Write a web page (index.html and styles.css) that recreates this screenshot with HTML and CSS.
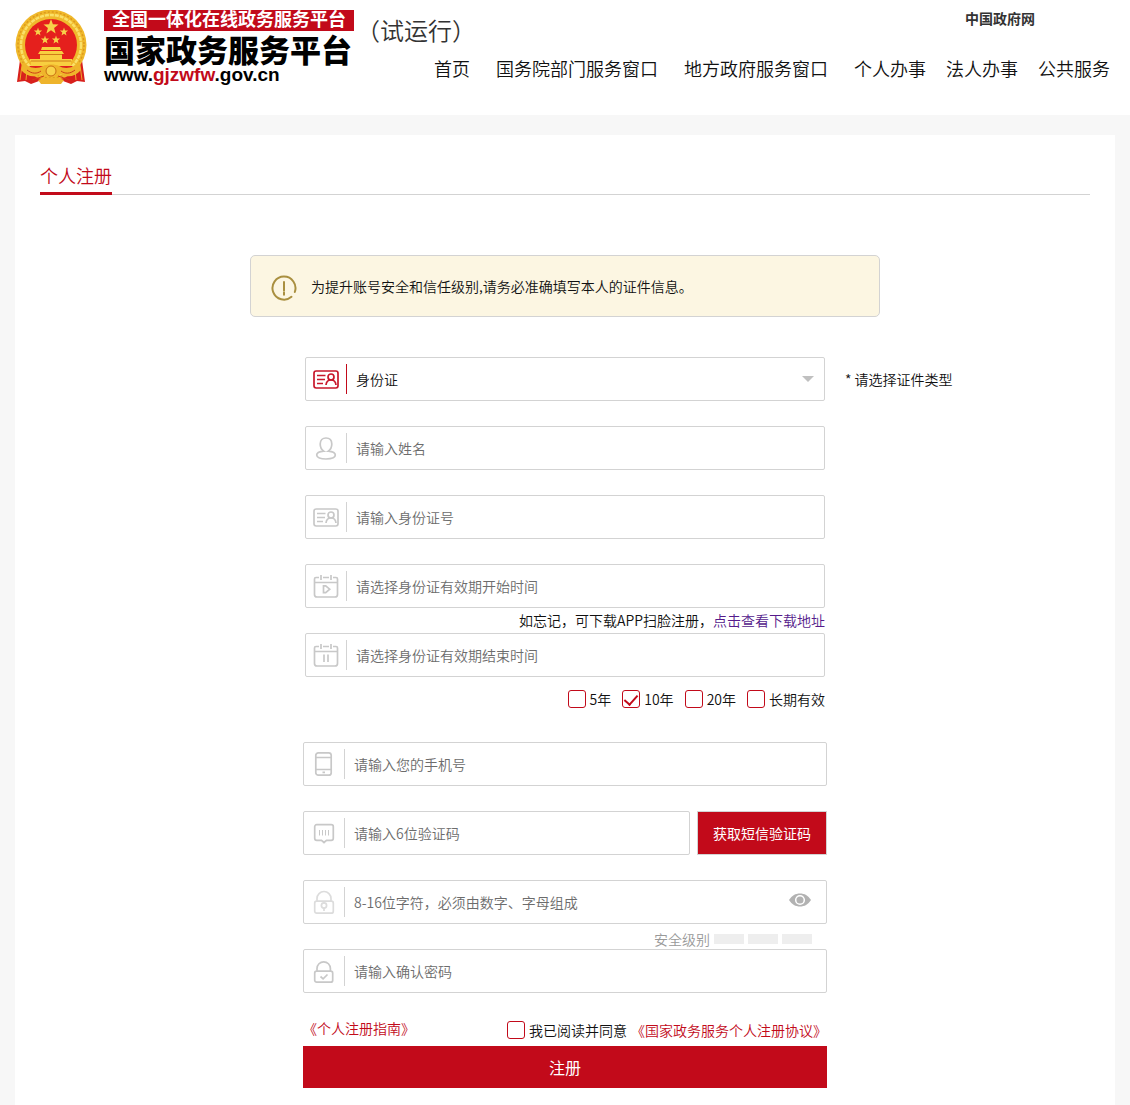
FILE: index.html
```html
<!DOCTYPE html>
<html lang="zh-CN">
<head>
    <meta charset="UTF-8">
    <title>个人注册</title>
    <link rel="stylesheet" href="styles.css">
</head>
<body>
    <!-- icons used by the form fields -->
    <svg class="sprite" aria-hidden="true">
        <symbol id="icon-card" viewBox="0 0 26 26">
            <rect x="1" y="5" width="24" height="17" rx="2.2" />
            <path d="M4 9.500h8.500M4 13.500h8M4 17.500h6" />
            <circle cx="18" cy="11" r="3" />
            <path d="M13 19c.3-3.500 2-5 5-5s4.700 1.500 5 5" />
        </symbol>
        <symbol id="icon-user" viewBox="0 0 26 26">
            <path d="M10.700 16.200C8.300 14.500 7.200 12 7.200 9c0-3.800 2.400-6 5.800-6s5.800 2.200 5.800 6c0 3-1.100 5.500-3.500 7.200 4.200.4 7 1.800 7 3.900 0 2.500-3.900 3.900-9.300 3.900s-9.300-1.400-9.300-3.900c0-2.100 2.800-3.500 7-3.900z" />
        </symbol>
        <symbol id="icon-start" viewBox="0 0 26 26">
            <path d="M3.500 4.500H3a1.500 1.500 0 0 0-1.500 1.500v15.500A2.500 2.500 0 0 0 4 24h18a2.500 2.500 0 0 0 2.500-2.500V6A1.500 1.500 0 0 0 23 4.500h-.5M1.500 9.500h23M10 4.500h6M8 2v5M18 2v5M3 4.500h3M20 4.500h3" />
            <path d="M10.500 12.800v6.800h2.200l4-3.400-4-3.400z" />
        </symbol>
        <symbol id="icon-end" viewBox="0 0 26 26">
            <path d="M3.500 4.500H3a1.500 1.500 0 0 0-1.500 1.500v15.500A2.500 2.500 0 0 0 4 24h18a2.500 2.500 0 0 0 2.500-2.500V6A1.500 1.500 0 0 0 23 4.500h-.5M1.500 9.500h23M10 4.500h6M8 2v5M18 2v5M3 4.500h3M20 4.500h3M11 12.500v7.500M15 12.500v7.500" />
        </symbol>
        <symbol id="icon-phone" viewBox="0 0 26 26">
            <rect x="4.800" y="1.800" width="15.400" height="22.400" rx="2.500" />
            <path d="M5 6.500h15M5 18.500h15M11.500 21.300h2.500" />
        </symbol>
        <symbol id="icon-sms" viewBox="0 0 26 26">
            <path d="M5.700 4.700h14.600a2 2 0 0 1 2 2v11.600a2 2 0 0 1-2 2h-4.800L13 22.500l-2.500-2.200H5.700a2 2 0 0 1-2-2V6.700a2 2 0 0 1 2-2z" />
            <path d="M8.500 10v5.500M11.500 10v5.500M14.500 10v5.500M17.500 10v5.500" stroke-width="1" />
        </symbol>
        <symbol id="icon-lock" viewBox="0 0 26 26">
            <rect x="3.700" y="12.200" width="18.600" height="12" rx="2" />
            <path d="M6 12V9.500a7 7 0 0 1 14 0V12M13 19v3" />
            <circle cx="13" cy="16.500" r="2.600" />
        </symbol>
        <symbol id="icon-confirm" viewBox="0 0 26 26">
            <rect x="3.700" y="13.200" width="18" height="11" rx="2" />
            <path d="M6 13v-2.500a6.700 6.700 0 0 1 13.400 0V13M9.500 18.500l2.600 2.300 4.400-4.300" />
        </symbol>
    </svg>

    <header class="header">
        <svg class="emblem" viewBox="0 0 72 74" role="img" aria-label="国徽">
            <path d="M5 50L2 72l8-1 6 3 8-3h24l8 3 6-3 8 1-3-22z" fill="#d8201c" />
            <path d="M7 55l-2 15M12 59l-1 11M65 55l2 15M60 59l1 11" stroke="#f0a52a" fill="none" />
            <circle cx="36" cy="35" r="35.500" fill="#f0b92c" />
            <circle cx="36" cy="35" r="33" fill="none" stroke="#dc9a1e" stroke-width="1.500" stroke-dasharray="2 2" />
            <circle cx="36" cy="35" r="30" fill="none" stroke="#fae069" stroke-width="2.500" stroke-dasharray="4 1" />
            <circle cx="36" cy="35" r="26" fill="#e5201d" />
            <path d="M36 9l1.900 5.300 5.600.2-4.400 3.500 1.500 5.400-4.600-3.100-4.600 3.100 1.500-5.400-4.400-3.500 5.600-.2z" fill="#f7d24a" />
            <path id="star" d="M23 17.500l1 2.900 3.100.1-2.400 1.900.8 3-2.500-1.700-2.500 1.700.8-3-2.400-1.900 3.100-.1z" fill="#f7d24a" />
            <use href="#star" x="26" />
            <use href="#star" x="7" y="8" />
            <use href="#star" x="18" y="8" />
            <path d="M27 37h18l1 3H26zM25 41h22l2 3H23zM25 44h22v5H25zM15 49h42v2h-42zM16 51h40v5H16z" fill="#f8cf40" />
            <path d="M16 51h40M25 44.500h22" stroke="#cf7c18" fill="none" />
            <path d="M14 56h44l-6 7H20z" fill="#de221d" />
            <path d="M8 52c6 7 15 7 20 4 3-2 13-2 16 0 5 3 14 3 20-4l2 8c-6 7-14 8-20 4-3 4-17 4-20 0-6 4-14 3-20-4z" fill="#efb52b" />
            <circle cx="36" cy="61" r="5" fill="#f9d34a" stroke="#c86d13" />
            <path d="M23 70c7-3 19-3 26 0l-3 4H26z" fill="#eeb42c" />
            <path d="M29 66l-12 4M43 66l12 4M12 60c5 4 10 4 14 1M60 60c-5 4-10 4-14 1" stroke="#ce3c18" fill="none" />
        </svg>
        <div class="wordmark">
            <div class="wordmark-top">全国一体化在线政务服务平台</div>
            <div class="wordmark-name">国家政务服务平台</div>
            <div class="wordmark-url">www.<span>gjzwfw</span>.gov.cn</div>
        </div>
        <div class="trial">（试运行）</div>
        <div class="header-right">
            <a class="gov-link" href="#">中国政府网</a>
            <nav class="nav">
                <a href="#">首页</a>
                <a href="#">国务院部门服务窗口</a>
                <a href="#">地方政府服务窗口</a>
                <div class="nav-services">
                    <a href="#">个人办事</a>
                    <a href="#">法人办事</a>
                    <a href="#">公共服务</a>
                </div>
            </nav>
        </div>
    </header>

    <main class="panel">
        <div class="tabs">
            <h1 class="tab">个人注册</h1>
        </div>

        <div class="notice">
            <svg class="notice-icon" viewBox="0 0 26 26" aria-hidden="true">
                <path d="M20.500 21.800A11.500 11.500 0 1 1 23.800 17M13 7v8.500M13 17.500v2.200" />
            </svg>
            <p>为提升账号安全和信任级别,请务必准确填写本人的证件信息。</p>
        </div>

        <form>
            <div class="type-row">
                <div class="field field-active">
                    <label for="cardType" aria-label="证件类型"><svg class="icon"><use href="#icon-card" /></svg></label>
                    <select id="cardType">
                        <option>身份证</option>
                    </select>
                </div>
                <span class="tip">* 请选择证件类型</span>
            </div>

            <div class="identity">
                <div class="field">
                    <label for="name" aria-label="姓名"><svg class="icon"><use href="#icon-user" /></svg></label>
                    <input type="text" id="name" placeholder="请输入姓名">
                </div>
                <div class="field">
                    <label for="cardNo" aria-label="身份证号"><svg class="icon"><use href="#icon-card" /></svg></label>
                    <input type="text" id="cardNo" placeholder="请输入身份证号">
                </div>
                <div class="field-group">
                    <div class="field">
                        <label for="startDate" aria-label="开始时间"><svg class="icon"><use href="#icon-start" /></svg></label>
                        <input type="text" id="startDate" placeholder="请选择身份证有效期开始时间">
                    </div>
                    <p class="forget">如忘记，可下载APP扫脸注册，<a href="#">点击查看下载地址</a></p>
                    <div class="field">
                        <label for="endDate" aria-label="结束时间"><svg class="icon"><use href="#icon-end" /></svg></label>
                        <input type="text" id="endDate" placeholder="请选择身份证有效期结束时间">
                    </div>
                    <div class="years">
                        <label class="check"><input type="checkbox">5年</label>
                        <label class="check"><input type="checkbox" checked>10年</label>
                        <label class="check"><input type="checkbox">20年</label>
                        <label class="check"><input type="checkbox">长期有效</label>
                    </div>
                </div>
            </div>

            <div class="account">
                <div class="field">
                    <label for="phone" aria-label="手机号"><svg class="icon"><use href="#icon-phone" /></svg></label>
                    <input type="tel" id="phone" placeholder="请输入您的手机号">
                </div>
                <div class="code-row">
                    <div class="field">
                        <label for="code" aria-label="验证码"><svg class="icon"><use href="#icon-sms" /></svg></label>
                        <input type="text" id="code" placeholder="请输入6位验证码">
                    </div>
                    <button type="button" class="code-btn">获取短信验证码</button>
                </div>
                <div class="field-group">
                    <div class="field">
                        <label for="password" aria-label="密码"><svg class="icon icon-light"><use href="#icon-lock" /></svg></label>
                        <input type="password" id="password" placeholder="8-16位字符，必须由数字、字母组成">
                        <button type="button" class="eye" aria-label="显示密码">
                            <svg viewBox="0 0 22 14" aria-hidden="true">
                                <path d="M0 7C3 2.500 6.500.5 11 .5S19 2.500 22 7c-3 4.500-6.500 6.500-11 6.500S3 11.500 0 7z" fill="#b2b2b2" />
                                <circle cx="11" cy="7" r="4.300" fill="#b2b2b2" stroke="#fff" stroke-width="1.500" />
                            </svg>
                        </button>
                    </div>
                    <div class="strength">安全级别<i></i><i></i><i></i></div>
                    <div class="field">
                        <label for="confirm" aria-label="确认密码"><svg class="icon"><use href="#icon-confirm" /></svg></label>
                        <input type="password" id="confirm" placeholder="请输入确认密码">
                    </div>
                </div>
                <div class="submit-area">
                    <div class="agreement">
                        <a href="#">《个人注册指南》</a>
                        <div class="agree">
                            <label class="check"><input type="checkbox">我已阅读并同意</label>
                            <a href="#">《国家政务服务个人注册协议》</a>
                        </div>
                    </div>
                    <button type="submit" class="submit-btn">注册</button>
                </div>
            </div>
        </form>
    </main>
</body>
</html>
```
FILE: styles.css
```css
* {
    box-sizing: border-box;
}
body {
    margin: 0;
    min-height: 100vh;
    display: flex;
    flex-direction: column;
    background-color: #f7f7f7;
    color: #111;
    font: 350 14px/20px "Noto Sans CJK SC", sans-serif;
}
a {
    color: #c20a1a;
    text-decoration: none;
}
h1, p {
    margin: 0;
}
input, select, button {
    font: inherit;
    color: inherit;
}
button {
    padding: 0;
    border: none;
    cursor: pointer;
}
.sprite {
    position: absolute;
    width: 0;
    height: 0;
}

/* header */
.header {
    display: flex;
    align-items: flex-start;
    height: 115px;
    padding: 10px 20px 0 15px;
    background-color: #fff;
}
.emblem {
    width: 72px;
    height: 74px;
    flex: none;
}
.wordmark {
    flex: none;
    width: 250px;
    margin-left: 17px;
    color: #000;
    font-family: "Liberation Sans", "Noto Sans CJK SC", sans-serif;
    white-space: nowrap;
}
.wordmark-top {
    background-color: #c20a1a;
    color: #fff;
    font-size: 18px;
    font-weight: 700;
    line-height: 21px;
    text-align: center;
}
.wordmark-name {
    padding-top: 4px;
    font-size: 31px;
    font-weight: 900;
    line-height: 33px;
}
.wordmark-url {
    font-size: 19px;
    font-weight: 700;
    line-height: 14px;
}
.wordmark-url span {
    color: #c20a1a;
}
.trial {
    flex: none;
    margin-left: 2px;
    font-size: 24px;
    line-height: 40px;
    color: #333;
}
.header-right {
    flex: 1;
    display: flex;
    flex-direction: column;
    align-items: flex-end;
    gap: 27px;
    margin-left: -60px;
}
.header-right a {
    color: #111;
}
.header-right .gov-link {
    margin-right: 75px;
    font-weight: 700;
    line-height: 16px;
    color: #333;
}
.nav, .nav-services {
    display: flex;
    gap: 26px;
    font-size: 18px;
    line-height: 30px;
    white-space: nowrap;
}
.nav-services {
    gap: 20px;
}

/* page panel */
.panel {
    flex: 1;
    margin: 20px 15px 0;
    padding: 25px 25px 16px;
    background-color: #fff;
}
.tabs {
    display: flex;
    height: 35px;
    margin-bottom: 60px;
    border-bottom: 1px solid #d3d3d3;
}
.tab {
    height: 35px;
    border-bottom: 3px solid #c20a1a;
    color: #c20a1a;
    font-size: 18px;
    font-weight: 350;
    line-height: 30px;
}
.notice {
    display: flex;
    align-items: center;
    gap: 14px;
    max-width: 630px;
    height: 62px;
    margin: 0 auto 40px;
    padding: 0 20px;
    border: 1px solid #d3d3d3;
    border-radius: 5px;
    background-color: #fcf6e2;
}
.notice-icon {
    width: 26px;
    height: 26px;
    margin-top: 4px;
    fill: none;
    stroke: #a98f3f;
    stroke-width: 2;
    stroke-linecap: round;
}

/* form */
.type-row {
    display: grid;
    grid-template-columns: 1fr 520px 1fr;
    align-items: center;
    margin-bottom: 25px;
}
.type-row .field {
    grid-column: 2;
}
.tip {
    padding-left: 20px;
}
.identity, .account {
    display: flex;
    flex-direction: column;
    gap: 25px;
    max-width: 520px;
    margin: 0 auto 25px;
}
.account {
    max-width: 524px;
    margin-bottom: 0;
}
.field {
    display: flex;
    align-items: center;
    height: 44px;
    border: 1px solid #d3d3d3;
    border-radius: 2px;
    background-color: #fff;
}
.field > label {
    flex: none;
    display: flex;
    align-items: center;
    justify-content: center;
    width: 41px;
    height: 30px;
    border-right: 1px solid #d3d3d3;
}
.field > input, .field > select {
    flex: 1;
    min-width: 0;
    height: 42px;
    padding: 0 9px;
    border: none;
    outline: none;
    background: none;
}
.field > input::placeholder {
    color: #6c6c6c;
}
.field > select {
    appearance: none;
}
.icon {
    width: 26px;
    height: 26px;
    fill: none;
    stroke: #c8c8c8;
    stroke-width: 1.7;
}
.icon-light {
    stroke: #dcdcdc;
}
.field-active > label {
    border-color: #c20a1a;
}
.field-active .icon {
    stroke: #c8172b;
}
.field-active::after {
    content: "";
    margin-right: 10px;
    border: 6px solid transparent;
    border-top-color: #c0c0c0;
    border-bottom: none;
}
.forget {
    line-height: 25px;
    text-align: right;
}
.forget a {
    color: #551a8b;
}
.years {
    display: flex;
    justify-content: flex-end;
    gap: 11px;
    height: 40px;
    padding-top: 12px;
}
.check {
    display: flex;
    align-items: center;
    gap: 4px;
    height: 20px;
}
.check input {
    appearance: none;
    width: 18px;
    height: 18px;
    margin: 0;
    border: 1px solid #c20a1a;
    border-radius: 3px;
    background-color: #fff;
}
.check input:checked::after {
    content: "";
    display: block;
    width: 6px;
    height: 11px;
    margin: 1px auto 0;
    border: solid #c20a1a;
    border-width: 0 2px 2px 0;
    transform: rotate(42deg);
}
.code-row {
    display: flex;
    gap: 7px;
}
.code-row .field {
    flex: 1;
}
.code-btn {
    width: 130px;
    border: 1px solid #d3d3d3;
    background-color: #c20a1a;
    color: #fff;
    font-weight: 400;
}
.eye {
    width: 22px;
    height: 14px;
    margin: 0 15px 4px 0;
    background: none;
}
.eye svg {
    display: block;
}
.strength {
    display: flex;
    align-items: center;
    justify-content: flex-end;
    gap: 4px;
    height: 25px;
    padding: 4px 15px 0 0;
    color: #999;
}
.strength i {
    width: 30px;
    height: 10px;
    background-color: #eee;
}
.agreement {
    display: flex;
    justify-content: space-between;
    align-items: flex-start;
    height: 28px;
}
.agree {
    display: flex;
    gap: 4px;
    padding-top: 2px;
}
.submit-btn {
    display: block;
    width: 100%;
    height: 42px;
    background-color: #c20a1a;
    color: #fff;
    font-size: 16px;
    font-weight: 400;
}
```
